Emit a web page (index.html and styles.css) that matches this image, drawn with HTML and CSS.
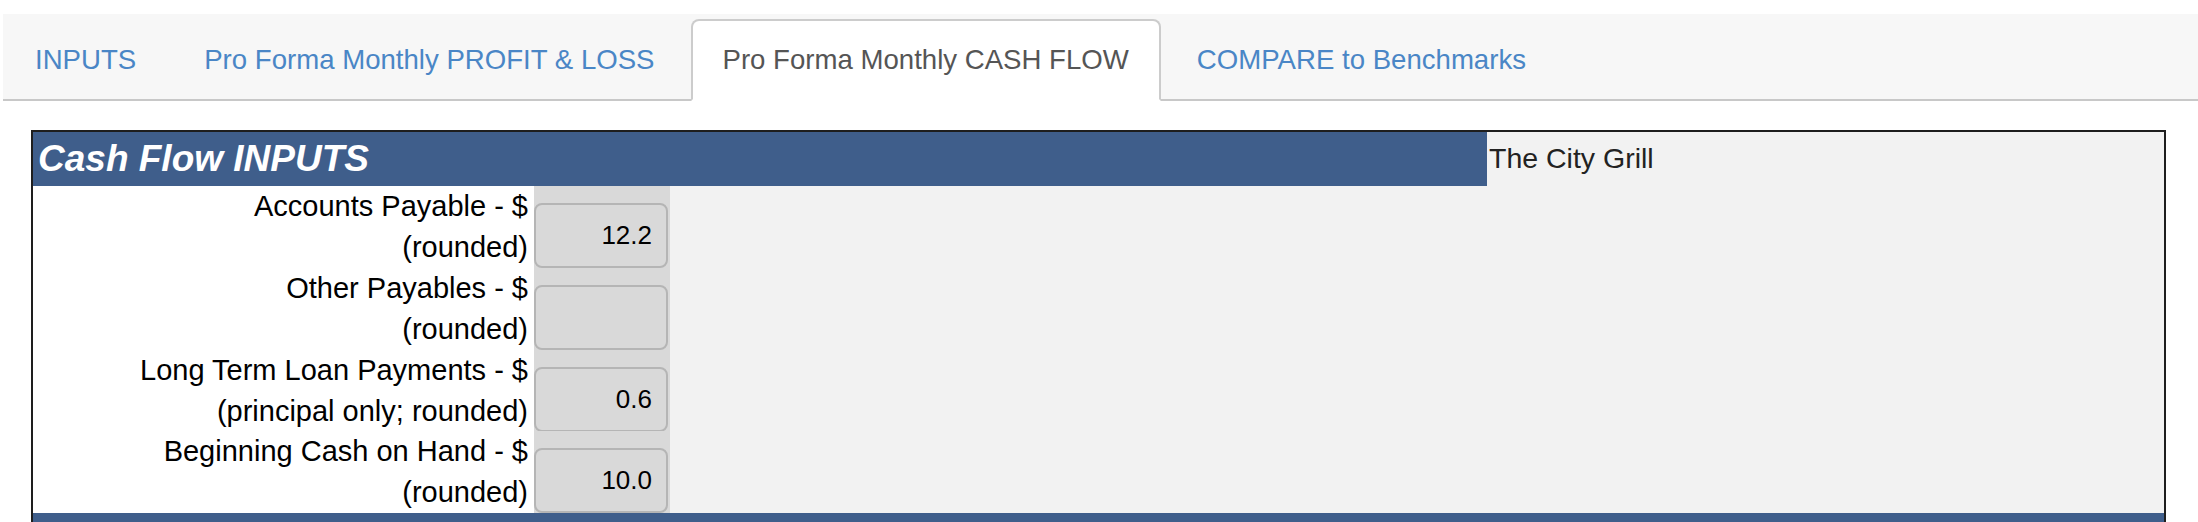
FILE: index.html
```html
<!DOCTYPE html>
<html lang="en">
<head>
<meta charset="UTF-8" />
<meta name="viewport" content="width=device-width, initial-scale=1.0" />
<title>Pro Forma Monthly CASH FLOW</title>
<link rel="stylesheet" href="styles.css">
</head>
<body>
<ul class="tabs">
  <li><a href="#">INPUTS</a></li>
  <li><a href="#">Pro Forma Monthly PROFIT &amp; LOSS</a></li>
  <li class="active"><a href="#">Pro Forma Monthly CASH FLOW</a></li>
  <li><a href="#">COMPARE to Benchmarks</a></li>
</ul>

<div class="sheet">
  <div class="sheet-head">
    <div class="sheet-title">Cash Flow INPUTS</div>
    <div class="sheet-name">The City Grill</div>
  </div>
  <div class="sheet-row">
    <div class="lbl">Accounts Payable - $<br />(rounded)</div>
    <div class="val"><input class="num" value="12.2" readonly /></div>
    <div class="rest"></div>
  </div>
  <div class="sheet-row">
    <div class="lbl">Other Payables - $<br />(rounded)</div>
    <div class="val"><input class="num" value="" readonly /></div>
    <div class="rest"></div>
  </div>
  <div class="sheet-row">
    <div class="lbl">Long Term Loan Payments - $<br />(principal only; rounded)</div>
    <div class="val"><input class="num" value="0.6" readonly /></div>
    <div class="rest"></div>
  </div>
  <div class="sheet-row">
    <div class="lbl">Beginning Cash on Hand - $<br />(rounded)</div>
    <div class="val"><input class="num" value="10.0" readonly /></div>
    <div class="rest"></div>
  </div>
  <div class="sheet-foot"></div>
</div>
</body>
</html>
```

FILE: styles.css
```css
body{margin:0;padding:0;font-family:"Liberation Sans",Arial,sans-serif;background:#fff;color:#000;}
.tabs{display:flex;list-style:none;margin:14px 0 0 3px;padding:5px 0 0;background:#f7f7f7;border-bottom:2px solid #c8c8c8;font-size:27.6px;line-height:40px;}
.tabs li{margin:0 4px -2px 0;}
.tabs a{display:block;padding:19px 30px;border:2px solid transparent;border-radius:8px 8px 0 0;color:#4a86c6;text-decoration:none;}
.tabs .active a{background:#fff;color:#555;border-color:#ccc;border-bottom-color:transparent;}
.sheet{margin:29px 32px 0 31px;border:2px solid #1e1e1e;border-bottom:none;background:#f2f2f2;}
.sheet-head{display:flex;height:54px;}
.sheet-title{width:1449px;padding-left:5px;background:#3f5e8b;color:#fff;font-size:37px;font-weight:bold;font-style:italic;line-height:54px;}
.sheet-name{padding-left:2px;font-size:28.5px;line-height:52px;color:#222;}
.sheet-row{display:grid;grid-template-columns:501px 136px 1fr;height:81.75px;}
.lbl{background:#fff;text-align:right;padding-right:6px;font-size:29px;line-height:41px;}
.val{background:#d9d9d9;display:flex;align-items:flex-end;}
.num{box-sizing:border-box;width:134px;height:65px;margin:0;padding:0 14px 0 4px;border:2px solid #b5b5b5;border-radius:8px;background:#d9d9d9;font-family:"Liberation Sans",Arial,sans-serif;font-size:26px;text-align:right;color:#000;outline:none;}
.sheet-foot{height:40px;background:#3f5e8b;}
```
